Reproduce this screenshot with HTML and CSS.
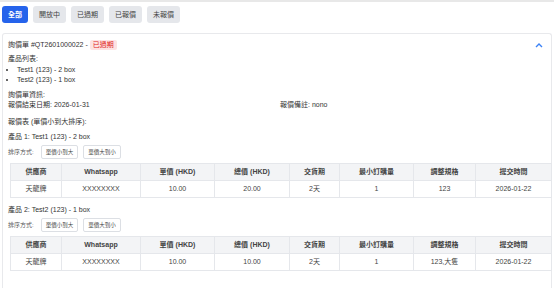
FILE: index.html
```html
<!DOCTYPE html>
<html lang="zh-Hant">
<head>
    <meta charset="UTF-8">
    <meta name="viewport" content="width=device-width, initial-scale=1.0">
    <title>詢價單</title>
    <link rel="stylesheet" href="styles.css">
</head>
<body>
    <div class="topbar"></div>
    <div class="tabs">
        <button class="tab active">全部</button>
        <button class="tab">開放中</button>
        <button class="tab">已過期</button>
        <button class="tab">已報價</button>
        <button class="tab">未報價</button>
    </div>

    <div class="card">
        <div class="card-head">
            <div class="title">詢價單 #QT2601000022 - <span class="badge">已過期</span></div>
            <svg class="chevron" width="8" height="6" viewBox="0 0 8 6">
                <path d="M1 5 L4 2 L7 5" fill="none" stroke="#3b82f6" stroke-width="1.4"/>
            </svg>
        </div>

        <div class="label gap-s">產品列表:</div>
        <ul class="items">
            <li>Test1 (123) - 2 box</li>
            <li>Test2 (123) - 1 box</li>
        </ul>

        <div class="label gap-m">詢價單資訊:</div>
        <div class="info">
            <div>報價結束日期: 2026-01-31</div>
            <div>報價備註: nono</div>
        </div>

        <div class="label gap-l">報價表 (單價小到大排序):</div>

        <div class="product">
            <div class="label">產品 1: Test1 (123) - 2 box</div>
            <div class="sort">
                <span class="sort-label">排序方式:</span>
                <button class="sort-btn">單價小到大</button>
                <button class="sort-btn">單價大到小</button>
            </div>
            <table class="quotes">
                <colgroup>
                    <col style="width:51px"><col style="width:79px"><col style="width:74px"><col style="width:75px">
                    <col style="width:50px"><col style="width:74px"><col style="width:62px"><col style="width:76px">
                </colgroup>
                <tr><th>供應商</th><th>Whatsapp</th><th>單價 (HKD)</th><th>總價 (HKD)</th><th>交貨期</th><th>最小訂購量</th><th>調整規格</th><th>提交時間</th></tr>
                <tr><td>天龍牌</td><td>XXXXXXXX</td><td>10.00</td><td>20.00</td><td>2天</td><td>1</td><td>123</td><td>2026-01-22</td></tr>
            </table>
        </div>

        <div class="product second">
            <div class="label">產品 2: Test2 (123) - 1 box</div>
            <div class="sort">
                <span class="sort-label">排序方式:</span>
                <button class="sort-btn">單價小到大</button>
                <button class="sort-btn">單價大到小</button>
            </div>
            <table class="quotes">
                <colgroup>
                    <col style="width:51px"><col style="width:79px"><col style="width:74px"><col style="width:75px">
                    <col style="width:50px"><col style="width:74px"><col style="width:62px"><col style="width:76px">
                </colgroup>
                <tr><th>供應商</th><th>Whatsapp</th><th>單價 (HKD)</th><th>總價 (HKD)</th><th>交貨期</th><th>最小訂購量</th><th>調整規格</th><th>提交時間</th></tr>
                <tr><td>天龍牌</td><td>XXXXXXXX</td><td>10.00</td><td>10.00</td><td>2天</td><td>1</td><td>123,大隻</td><td>2026-01-22</td></tr>
            </table>
        </div>
    </div>
</body>
</html>
```

FILE: styles.css
```css
body {
    margin: 0;
    font-family: 'Liberation Sans', 'Noto Sans CJK TC', sans-serif;
    font-size: 7px;
    line-height: 10px;
    color: #333;
    background: #fff;
    height: 288px;
    overflow: hidden;
}
.topbar {
    height: 2px;
    background: #e8e8e8;
}
.tabs {
    display: flex;
    gap: 5px;
    padding: 4px 2px 0;
}
.tab {
    font-family: inherit;
    font-size: 7px;
    line-height: 9px;
    padding: 4px 6px;
    border: none;
    border-radius: 3px;
    background: #e5e7eb;
    color: #444;
}
.tab.active {
    background: #2563eb;
    color: white;
    font-weight: bold;
}
.card {
    margin: 10px 2px 0 2px;
    border: 1px solid #e8e9ec;
    border-bottom: none;
    border-radius: 3px 3px 0 0;
    padding: 6px 5px 20px 5px;
}
.card-head {
    display: flex;
    justify-content: space-between;
    align-items: center;
}
.title {
    height: 10px;
}
.badge {
    display: inline-block;
    background: #fde2e2;
    color: #e02424;
    padding: 0 3px;
    border-radius: 2px;
    line-height: 10px;
}
.chevron {
    margin-right: 3px;
}
.label {
    color: #333;
}
.gap-s { margin-top: 4px; }
.gap-m { margin-top: 5px; }
.gap-l { margin-top: 7px; }
.items {
    margin: 1px 0 0;
    padding-left: 9px;
}
.info {
    display: grid;
    grid-template-columns: 1fr 1fr;
    gap: 6px;
}
.product {
    margin-top: 5px;
}
.product.second {
    margin-top: 7px;
}
.sort {
    display: flex;
    align-items: center;
    margin-top: 3px;
    gap: 5px;
}
.sort-label {
    font-size: 6px;
    color: #555;
    margin-right: 2px;
}
.sort-btn {
    font-family: inherit;
    font-size: 5.5px;
    line-height: 8px;
    padding: 2px 4px;
    background: #fff;
    border: 1px solid #dcdfe4;
    border-radius: 2px;
    color: #444;
}
.quotes {
    margin: 4px 0 0 2px;
    border-collapse: collapse;
    table-layout: fixed;
    width: 541px;
    border: 1px solid #e5e7eb;
}
.quotes th, .quotes td {
    border: 1px solid #e5e7eb;
    text-align: center;
    height: 16px;
    padding: 0;
    color: #444;
}
.quotes th {
    background: #f3f4f6;
    font-weight: bold;
}
```
